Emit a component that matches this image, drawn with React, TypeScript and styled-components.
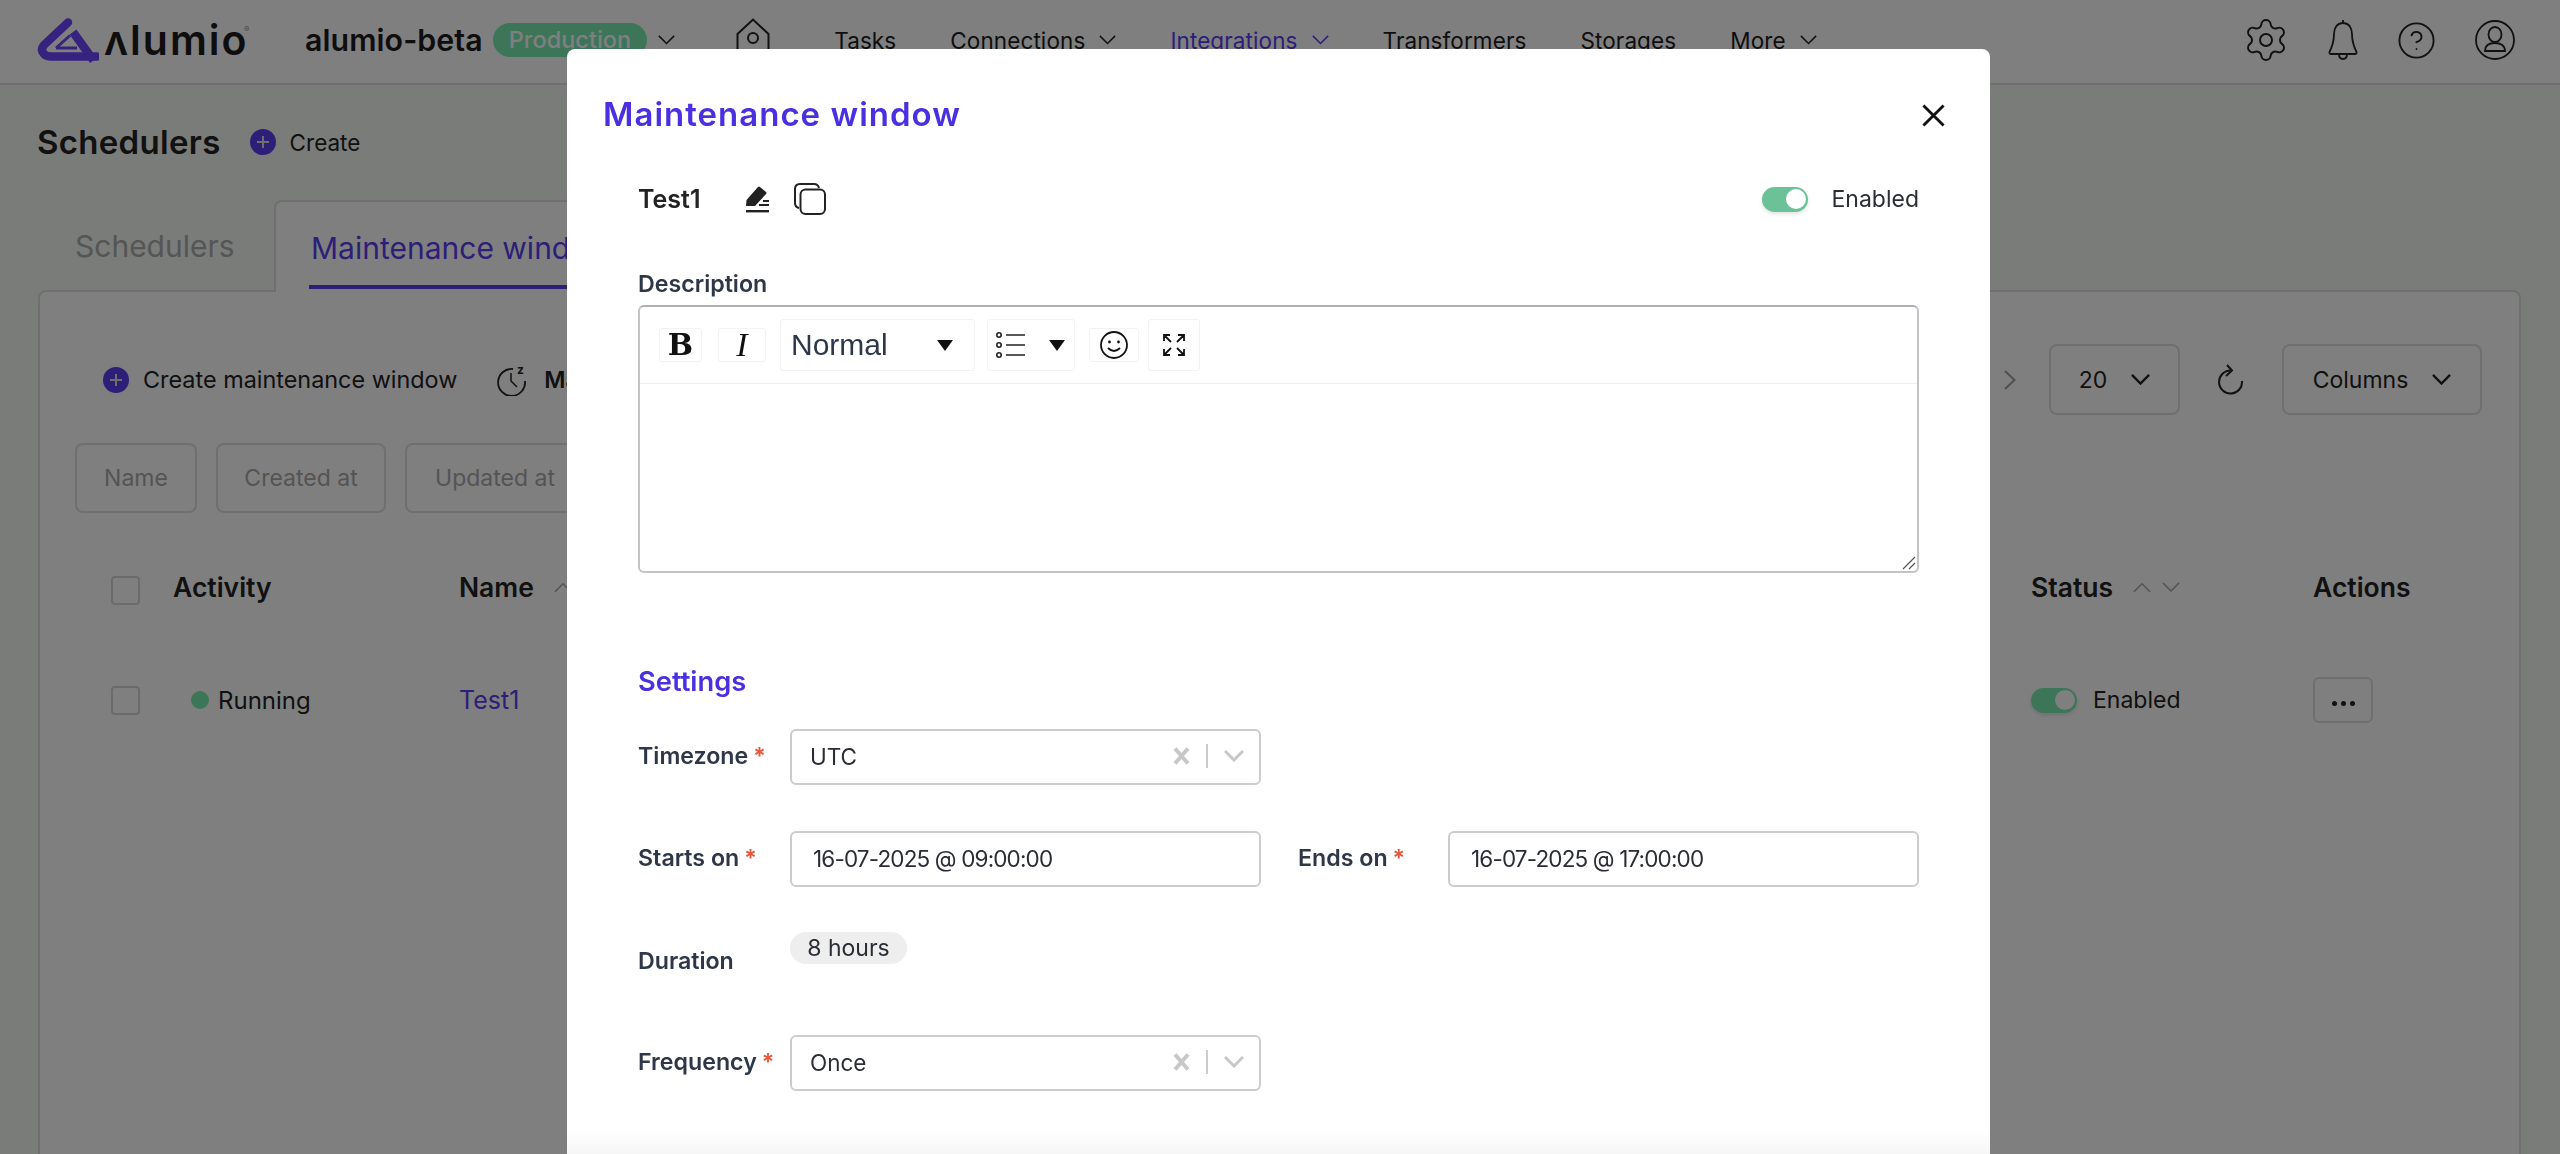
import styled, { createGlobalStyle } from "styled-components";
import { Settings, CircleHelp } from "lucide-react";

const GlobalStyle = createGlobalStyle`
  html, body {
    margin: 0;
    height: 100%;
    overflow: hidden;
    background: #f4f8f4;
    font-family: "Inter", "Liberation Sans", sans-serif;
    color: #222;
  }
`;

const Page = styled.div`
  width: 2560px;
  height: 1154px;
  overflow: hidden;
`;

const Header = styled.header`
  display: flex;
  align-items: center;
  box-sizing: border-box;
  height: 85px;
  padding: 0 45px 3px 37px;
  background: #fff;
  border-bottom: 2px solid #dedede;
`;

const LogoMark = styled.svg`
  width: 62px;
  height: 46px;
  flex: none;
`;

const Wordmark = styled.span`
  position: relative;
  margin-left: 5px;
  width: 201px;
  font-size: 41px;
  font-weight: 600;
  letter-spacing: 2px;
  color: #1c1c1c;
  sup {
    position: absolute;
    left: 140px;
    top: 9px;
    font-size: 8px;
    font-weight: 400;
    letter-spacing: 0;
    color: #888;
  }
`;

const ProjectName = styled.span`
  font-size: 30.3px;
  font-weight: 600;
  letter-spacing: 0.1px;
  color: #1c1c1c;
`;

const EnvPill = styled.span`
  margin-left: 10px;
  padding: 0 16px;
  height: 34px;
  line-height: 34px;
  border-radius: 17px;
  background: #7aeab2;
  color: #fff;
  font-size: 23.5px;
  font-weight: 500;
`;

const EnvCaret = styled.span`
  display: flex;
  margin: 0 61px 0 11px;
`;

const Nav = styled.nav`
  display: flex;
  align-items: center;
  gap: 54px;
  font-size: 22.5px;
  letter-spacing: 0.1px;
`;

const NavItem = styled.span<{ $active?: boolean; $first?: boolean }>`
  display: flex;
  align-items: center;
  gap: 14px;
  margin-left: ${(p) => (p.$first ? "54px" : "0")};
  color: ${(p) => (p.$active ? "#5a3cf0" : "#1c1c1c")};
`;

const HeaderIcons = styled.div`
  display: flex;
  align-items: center;
  gap: 38px;
  margin-left: auto;
  color: #222;
`;

const Main = styled.main`
  padding: 37px 39px 0 38px;
`;

const TitleRow = styled.div`
  display: flex;
  align-items: center;
  height: 40px;
`;

const PageTitle = styled.h1`
  margin: 0 29px 0 -1px;
  font-size: 33px;
  font-weight: 600;
  letter-spacing: 0.3px;
  color: #222;
`;

const AddButton = styled.span<{ $size: number }>`
  display: flex;
  align-items: center;
  gap: 14px;
  font-size: ${(p) => p.$size}px;
  color: #222;
`;

const PlusCircle = styled.span`
  position: relative;
  width: 26px;
  height: 26px;
  flex: none;
  border-radius: 50%;
  background: #5a3cf0;
  &::before,
  &::after {
    content: "";
    position: absolute;
    background: #ddd;
    left: 7px;
    right: 7px;
    top: 12px;
    height: 2px;
  }
  &::after {
    left: 12px;
    right: auto;
    top: 7px;
    width: 2px;
    height: 12px;
  }
`;

const Tabs = styled.div`
  display: flex;
  margin-top: 38px;
  height: 90px;
`;

const Tab = styled.div<{ $active?: boolean }>`
  position: relative;
  z-index: 1;
  box-sizing: border-box;
  height: ${(p) => (p.$active ? "92px" : "90px")};
  width: ${(p) => (p.$active ? "420px" : "236px")};
  padding: 30px 0 0 ${(p) => (p.$active ? "35px" : "37px")};
  font-size: 30px;
  line-height: 32px;
  white-space: nowrap;
  color: ${(p) => (p.$active ? "#5a3cf0" : "#aaa")};
  background: ${(p) => (p.$active ? "#fff" : "transparent")};
  border: ${(p) => (p.$active ? "2px solid #dedede" : "none")};
  border-bottom: none;
  border-radius: 8px 8px 0 0;
`;

const TabUnderline = styled.span`
  position: absolute;
  left: 33px;
  right: 0;
  top: 83px;
  height: 4px;
  background: #5a3cf0;
`;

const Card = styled.section`
  height: 900px;
  box-sizing: border-box;
  padding-top: 52px;
  background: #fff;
  border: 2px solid #dedede;
  border-radius: 8px;
`;

const Toolbar = styled.div`
  display: flex;
  align-items: center;
  height: 71px;
  padding: 0 37px 0 63px;
`;

const SnoozeButton = styled.span`
  display: flex;
  align-items: center;
  gap: 17px;
  margin-left: 38px;
  font-size: 23px;
  font-weight: 600;
  color: #222;
`;

const ToolbarRight = styled.div`
  display: flex;
  align-items: center;
  margin-left: auto;
`;

const PagerNext = styled.svg`
  margin-right: 33px;
`;

const RefreshSvg = styled.svg`
  margin-left: 38px;
`;

const OutlineSelect = styled.div<{ $width: number; $gap?: number }>`
  display: flex;
  align-items: center;
  justify-content: center;
  gap: 24px;
  box-sizing: border-box;
  width: ${(p) => p.$width}px;
  height: 71px;
  margin-left: ${(p) => p.$gap ?? 0}px;
  border: 2px solid #dedede;
  border-radius: 8px;
  font-size: 23px;
`;

const Filters = styled.div`
  display: flex;
  gap: 19px;
  margin: 28px 0 0 35px;
`;

const FilterBox = styled.div<{ $width: number }>`
  box-sizing: border-box;
  width: ${(p) => p.$width}px;
  height: 70px;
  line-height: 66px;
  text-align: center;
  border: 2px solid #dedede;
  border-radius: 8px;
  font-size: 23px;
  color: #a8a8a8;
`;

const TableRow = styled.div<{ $top: number }>`
  display: grid;
  grid-template-columns: 62px 286px 1572px 282px 1fr;
  align-items: center;
  height: 60px;
  margin-top: ${(p) => p.$top}px;
  padding-left: 71px;
`;

const Checkbox = styled.span`
  display: block;
  width: 25px;
  height: 25px;
  border: 2px solid #d6d6d6;
  border-radius: 4px;
`;

const HeadCell = styled.div`
  display: flex;
  align-items: center;
  gap: 20px;
  padding-bottom: 6px;
  font-size: 26.5px;
  font-weight: 600;
  color: #222;
`;

const SortIcons = styled.span`
  display: flex;
  gap: 11px;
`;

const StatusCell = styled.div`
  display: flex;
  align-items: center;
  gap: 9px;
  padding-left: 18px;
  font-size: 24px;
  color: #222;
`;

const StatusDot = styled.span`
  width: 18px;
  height: 18px;
  border-radius: 50%;
  background: #7aeab2;
`;

const LinkCell = styled.div`
  font-size: 25px;
  color: #5a3cf0;
`;

const ToggleCell = styled.div<{ $gap: number }>`
  display: flex;
  align-items: center;
  gap: ${(p) => p.$gap}px;
  font-size: 23px;
  color: #222;
`;

const Toggle = styled.span<{ $color: string }>`
  position: relative;
  display: block;
  width: 46px;
  height: 25px;
  border-radius: 13px;
  background: ${(p) => p.$color};
  box-shadow: 0 2px 4px rgba(0, 0, 0, 0.12);
  &::after {
    content: "";
    position: absolute;
    right: 2px;
    top: 2.5px;
    width: 20px;
    height: 20px;
    border-radius: 50%;
    background: #fff;
  }
`;

const DotsButton = styled.div`
  display: flex;
  align-items: center;
  justify-content: center;
  gap: 4px;
  box-sizing: border-box;
  width: 60px;
  height: 46px;
  padding-top: 6px;
  border: 2px solid #dedede;
  border-radius: 6px;
  i {
    width: 5px;
    height: 5px;
    border-radius: 50%;
    background: #222;
  }
`;

const Overlay = styled.div`
  position: fixed;
  inset: 0;
  z-index: 10;
  background: rgba(0, 0, 0, 0.5);
`;

const Modal = styled.div`
  position: fixed;
  z-index: 11;
  left: 567px;
  top: 49px;
  width: 1423px;
  height: 1105px;
  box-sizing: border-box;
  padding: 0 71px;
  background: #fff;
  border-radius: 8px 8px 0 0;
  overflow: hidden;
`;

const ModalHeader = styled.div`
  display: flex;
  align-items: center;
  justify-content: space-between;
  height: 130px;
  margin: 0 -26px 0 -35px;
`;

const ModalTitle = styled.h2`
  margin: 0;
  font-size: 33px;
  font-weight: 600;
  letter-spacing: 1px;
  color: #4a30e0;
`;

const CloseSvg = styled.svg`
  margin-top: 2px;
`;

const NameRow = styled.div`
  display: flex;
  align-items: center;
  height: 40px;
`;

const NameText = styled.span`
  width: 108px;
  font-size: 25px;
  font-weight: 600;
  color: #222;
`;

const CopyIcon = styled.svg`
  margin-left: 25px;
`;

const EnabledSwitch = styled.div`
  display: flex;
  align-items: center;
  gap: 24px;
  margin-left: auto;
  font-size: 23px;
  color: #2a2d33;
`;

const FieldLabel = styled.label<{ $width?: number }>`
  display: block;
  flex: none;
  box-sizing: border-box;
  width: ${(p) => (p.$width ? `${p.$width}px` : "auto")};
  padding-bottom: 2px;
  font-size: 23.2px;
  font-weight: 600;
  color: #2d3748;
  em {
    font-style: normal;
    margin-left: 5px;
    color: #e8553a;
  }
`;

const DescriptionLabel = styled(FieldLabel)`
  margin-top: 50px;
  height: 36px;
  padding-bottom: 0;
  line-height: 30px;
`;

const Editor = styled.div`
  position: relative;
  box-sizing: border-box;
  height: 268px;
  border: 2px solid #c4c4c8;
  border-top-color: #b0b0b4;
  border-radius: 6px;
`;

const EditorToolbar = styled.div`
  display: flex;
  align-items: center;
  height: 76px;
  padding-left: 19px;
  border-bottom: 1px solid #f0f0f0;
`;

const ToolButton = styled.div<{ $width: number; $tall?: boolean; $gap: number }>`
  display: flex;
  align-items: center;
  justify-content: center;
  box-sizing: border-box;
  width: ${(p) => p.$width}px;
  height: ${(p) => (p.$tall ? 52 : 34)}px;
  margin-left: ${(p) => p.$gap}px;
  border: 1px solid #f2f2f2;
  border-radius: 3px;
`;

const BoldGlyph = styled.span`
  font-family: "DejaVu Serif", "Liberation Serif", serif;
  font-weight: 700;
  font-size: 30px;
  line-height: 32px;
  color: #111;
`;

const ItalicGlyph = styled.span`
  font-family: "Liberation Serif", serif;
  font-style: italic;
  font-size: 34px;
  line-height: 32px;
  color: #111;
`;

const HeadingSelect = styled(ToolButton)`
  justify-content: space-between;
  padding: 0 21px 0 10px;
  font-family: "Liberation Sans", sans-serif;
  font-size: 30px;
  color: #2d3748;
`;

const ListSelect = styled(ToolButton)`
  justify-content: space-between;
  padding: 0 9px 0 8px;
`;

const Caret = styled.span`
  width: 0;
  height: 0;
  border-left: 8.5px solid transparent;
  border-right: 8.5px solid transparent;
  border-top: 11px solid #111;
`;

const ResizeHandle = styled.svg`
  position: absolute;
  right: 1px;
  bottom: 1px;
`;

const SectionTitle = styled.h3`
  margin: 93px 0 31px;
  height: 32px;
  font-size: 27.3px;
  line-height: 32px;
  font-weight: 600;
  color: #4a30e0;
`;

const Form = styled.div`
  display: flex;
  flex-direction: column;
  gap: 46px;
`;

const FormRow = styled.div`
  display: flex;
  align-items: center;
  height: 56px;
`;

const SelectBox = styled.div<{ $width?: number }>`
  display: flex;
  align-items: center;
  box-sizing: border-box;
  width: ${(p) => p.$width ?? 471}px;
  height: 56px;
  padding: 0 0 2px 18px;
  border: 2px solid #ccc;
  border-radius: 6px;
  font-size: 22.5px;
  color: #2a2d33;
`;

const SelectValue = styled.span`
  flex: 1;
`;

const SelectControls = styled.span`
  display: flex;
  align-items: center;
  gap: 16px;
  margin-right: 15px;
`;

const SelectDivider = styled.span`
  width: 2px;
  height: 24px;
  background: #ccc;
`;

const DateField = styled(SelectBox)`
  padding-left: 21px;
  letter-spacing: -0.85px;
`;

const EndField = styled.div`
  display: flex;
  align-items: center;
  margin-left: 37px;
`;

const ChipRow = styled(FormRow)`
  align-items: flex-start;
`;

const ChipLabel = styled(FieldLabel)`
  padding-bottom: 0;
  line-height: 56px;
`;

const Chip = styled.span`
  margin-top: -1px;
  box-sizing: border-box;
  height: 32px;
  width: 117px;
  text-align: center;
  line-height: 32px;
  border-radius: 16px;
  background: #eee;
  font-size: 23px;
  color: #2a2d33;
`;

const FooterFade = styled.div`
  position: absolute;
  left: 0;
  right: 0;
  bottom: 0;
  height: 24px;
  background: linear-gradient(to bottom, #ffffff, #f6f6f6);
`;

const Logo = () => (
  <LogoMark viewBox="0 0 62 46">
    <g fill="none" stroke="#6a46ff" strokeLinejoin="round">
      <path d="M31 5.5 L7 28 Q3 33 7 37 Q9.5 39.5 14 39.5 H60" strokeWidth="8.5" strokeLinecap="round" />
      <path d="M36 15 L56.5 43.5" strokeWidth="8.5" />
      <path d="M19 31 L33 18.5 M19 31 H40" strokeWidth="3" />
    </g>
  </LogoMark>
);

const Chevron = ({ size = 17, up = false, color = "#222", weight = 1.5 }) => (
  <svg width={size} height={size * 0.6} viewBox="0 0 20 12" fill="none" stroke={color} strokeWidth={(weight * 20) / size}>
    <path d={up ? "M1 11 L10 2 L19 11" : "M1 1 L10 10 L19 1"} />
  </svg>
);

const HomeSvg = styled.svg`
  flex: none;
  margin-right: 10px;
`;

const HomeIcon = () => (
  <HomeSvg width="34" height="44" viewBox="0 0 34 44" fill="none" stroke="#222" strokeWidth="2">
    <path d="M1.5 44 V16 L17 1.5 L32.5 16 V44" />
    <circle cx="17" cy="20" r="5" />
  </HomeSvg>
);

const BellIcon = () => (
  <svg width="30" height="42" viewBox="0 0 30 42" fill="none" stroke="#222" strokeWidth="1.8">
    <path d="M15 1 V4 M15 4 C9 4 6 9 6 15 C6 23 4 28 1.5 33 Q1 35 3 35 H27 Q29 35 28.5 33 C26 28 24 23 24 15 C24 9 21 4 15 4 Z" />
    <path d="M11 35 Q11 40 15 40 Q19 40 19 35" />
  </svg>
);

const UserIcon = () => (
  <svg width="40" height="40" viewBox="0 0 40 40" fill="none" stroke="#222" strokeWidth="1.8">
    <circle cx="20" cy="20" r="19" />
    <ellipse cx="20" cy="14.5" rx="6.5" ry="7.5" />
    <path d="M10 31 C10 25 15 23 20 23 C25 23 30 25 30 31 Z" />
  </svg>
);

const SnoozeIcon = () => (
  <svg width="32" height="32" viewBox="0 0 32 32" fill="none" stroke="#222" strokeWidth="1.8">
    <path d="M18 5 A13.5 13.5 0 1 0 30 17" />
    <path d="M16 9 V17 L22 23" strokeWidth="1.5" />
    <text x="22" y="10" fontSize="12" fontWeight="700" fill="#222" stroke="none" fontFamily="Inter, sans-serif">z</text>
  </svg>
);

const RefreshIcon = () => (
  <RefreshSvg width="26" height="31" viewBox="0 0 26 31" fill="none" stroke="#222" strokeWidth="2">
    <path d="M24 17 A11.5 11.5 0 1 1 12.5 6.5" />
    <path d="M9 1 L14 6.5 L8 12" />
  </RefreshSvg>
);

const EditIcon = () => (
  <svg width="23" height="27" viewBox="0 0 23 27" fill="#222">
    <path d="M0 20 L0.5 14 L12 1 Q13 0 14 1 L20 6 Q21 7 20 8 L9 20 Z" />
    <rect x="13" y="18" width="10" height="2" />
    <rect x="17" y="14" width="6" height="2" />
    <rect x="0" y="24" width="23" height="2.4" />
  </svg>
);

const CloseIcon = () => (
  <CloseSvg width="23" height="23" viewBox="0 0 24 24" fill="none" stroke="#111" strokeWidth="3">
    <path d="M1.5 1.5 L22.5 22.5 M22.5 1.5 L1.5 22.5" />
  </CloseSvg>
);

const ClearX = () => (
  <svg width="17" height="18" viewBox="0 0 17 18" fill="none" stroke="#c8c8c8" strokeWidth="4">
    <path d="M2 1.5 L15 16.5 M15 1.5 L2 16.5" />
  </svg>
);

const SmileIcon = () => (
  <svg width="28" height="28" viewBox="0 0 28 28" fill="none" stroke="#111" strokeWidth="1.8">
    <circle cx="14" cy="14" r="13" />
    <circle cx="9.5" cy="11" r="1.4" fill="#111" stroke="none" />
    <circle cx="18.5" cy="11" r="1.4" fill="#111" stroke="none" />
    <path d="M8 17 Q14 23 20 17" />
  </svg>
);

const ExpandIcon = () => (
  <svg width="22" height="22" viewBox="0 0 22 22" fill="none" stroke="#111" strokeWidth="1.8">
    <path d="M1 7 V1 H7 M1 1 L8 8 M15 1 H21 V7 M21 1 L14 8 M1 15 V21 H7 M1 21 L8 14 M21 15 V21 H15 M21 21 L14 14" />
  </svg>
);

const ListIcon = () => (
  <svg width="30" height="26" viewBox="0 0 30 26" fill="none" stroke="#222" strokeWidth="1.6">
    <circle cx="3" cy="3" r="2.2" />
    <circle cx="3" cy="13" r="2.2" />
    <circle cx="3" cy="23" r="2.2" />
    <path d="M10 3 H29 M10 13 H29 M10 23 H29" />
  </svg>
);

const App = () => (
  <Page>
    <GlobalStyle />
    <Header>
      <Logo />
      <Wordmark>
        ʌlumio<sup>®</sup>
      </Wordmark>
      <ProjectName>alumio-beta</ProjectName>
      <EnvPill>Production</EnvPill>
      <EnvCaret>
        <Chevron />
      </EnvCaret>
      <HomeIcon />
      <Nav>
        <NavItem $first>Tasks</NavItem>
        <NavItem>
          Connections <Chevron />
        </NavItem>
        <NavItem $active>
          Integrations <Chevron color="#5a3cf0" />
        </NavItem>
        <NavItem>Transformers</NavItem>
        <NavItem>Storages</NavItem>
        <NavItem>
          More <Chevron />
        </NavItem>
      </Nav>
      <HeaderIcons>
        <Settings size={48} strokeWidth={1} />
        <BellIcon />
        <CircleHelp size={41} strokeWidth={1.1} />
        <UserIcon />
      </HeaderIcons>
    </Header>

    <Main>
      <TitleRow>
        <PageTitle>Schedulers</PageTitle>
        <AddButton $size={22.5}>
          <PlusCircle />
          Create
        </AddButton>
      </TitleRow>
      <Tabs>
        <Tab>Schedulers</Tab>
        <Tab $active>
          Maintenance window
          <TabUnderline />
        </Tab>
      </Tabs>
      <Card>
        <Toolbar>
          <AddButton $size={23.4}>
            <PlusCircle />
            Create maintenance window
          </AddButton>
          <SnoozeButton>
            <SnoozeIcon />
            Maintenance
          </SnoozeButton>
          <ToolbarRight>
            <PagerNext width="12" height="20" viewBox="0 0 12 20" fill="none" stroke="#a0a0a0" strokeWidth="2">
              <path d="M1 1 L10.5 10 L1 19" />
            </PagerNext>
            <OutlineSelect $width={131}>
              20 <Chevron size={19} weight={2.4} />
            </OutlineSelect>
            <RefreshIcon />
            <OutlineSelect $width={200} $gap={38}>
              Columns <Chevron size={19} weight={2.4} />
            </OutlineSelect>
          </ToolbarRight>
        </Toolbar>
        <Filters>
          <FilterBox $width={122}>Name</FilterBox>
          <FilterBox $width={170}>Created at</FilterBox>
          <FilterBox $width={180}>Updated at</FilterBox>
        </Filters>
        <TableRow $top={47}>
          <Checkbox />
          <HeadCell>Activity</HeadCell>
          <HeadCell>
            Name
            <SortIcons>
              <Chevron size={18} up color="#aaa" />
              <Chevron size={18} color="#aaa" />
            </SortIcons>
          </HeadCell>
          <HeadCell>
            Status
            <SortIcons>
              <Chevron size={18} up color="#aaa" />
              <Chevron size={18} color="#aaa" />
            </SortIcons>
          </HeadCell>
          <HeadCell>Actions</HeadCell>
        </TableRow>
        <TableRow $top={50}>
          <Checkbox />
          <StatusCell>
            <StatusDot />
            Running
          </StatusCell>
          <LinkCell>Test1</LinkCell>
          <ToggleCell $gap={16}>
            <Toggle $color="#7aeab2" />
            Enabled
          </ToggleCell>
          <DotsButton>
            <i />
            <i />
            <i />
          </DotsButton>
        </TableRow>
      </Card>
    </Main>

    <Overlay />
    <Modal>
      <ModalHeader>
        <ModalTitle>Maintenance window</ModalTitle>
        <CloseIcon />
      </ModalHeader>
      <NameRow>
        <NameText>Test1</NameText>
        <EditIcon />
        <CopyIcon width="32" height="32" viewBox="0 0 32 32" fill="none" stroke="#222" strokeWidth="2">
          <path d="M5 25 Q1 24 1 20 V6 Q1 1 6 1 H20 Q24 1 25 5" />
          <rect x="6.5" y="6.5" width="24.5" height="24.5" rx="5" />
        </CopyIcon>
        <EnabledSwitch>
          <Toggle $color="#6bc296" />
          Enabled
        </EnabledSwitch>
      </NameRow>
      <DescriptionLabel>Description</DescriptionLabel>
      <Editor>
        <EditorToolbar>
          <ToolButton $width={43} $gap={0}>
            <BoldGlyph>B</BoldGlyph>
          </ToolButton>
          <ToolButton $width={48} $gap={16}>
            <ItalicGlyph>I</ItalicGlyph>
          </ToolButton>
          <HeadingSelect $width={195} $gap={14} $tall>
            Normal
            <Caret />
          </HeadingSelect>
          <ListSelect $width={88} $gap={12} $tall>
            <ListIcon />
            <Caret />
          </ListSelect>
          <ToolButton $width={50} $gap={14}>
            <SmileIcon />
          </ToolButton>
          <ToolButton $width={52} $gap={9} $tall>
            <ExpandIcon />
          </ToolButton>
        </EditorToolbar>
        <ResizeHandle width="14" height="14" viewBox="0 0 14 14" stroke="#555" strokeWidth="1.2">
          <path d="M13 1 L1 13 M13 7 L7 13" />
        </ResizeHandle>
      </Editor>
      <SectionTitle>Settings</SectionTitle>
      <Form>
        <FormRow>
          <FieldLabel $width={152}>
            Timezone<em>*</em>
          </FieldLabel>
          <SelectBox>
            <SelectValue>UTC</SelectValue>
            <SelectControls>
              <ClearX />
              <SelectDivider />
              <Chevron size={20} color="#c8c8c8" weight={3} />
            </SelectControls>
          </SelectBox>
        </FormRow>
        <FormRow>
          <FieldLabel $width={152}>
            Starts on<em>*</em>
          </FieldLabel>
          <DateField>16-07-2025 @ 09:00:00</DateField>
          <EndField>
            <FieldLabel $width={150}>
              Ends on<em>*</em>
            </FieldLabel>
            <DateField $width={471}>16-07-2025 @ 17:00:00</DateField>
          </EndField>
        </FormRow>
        <ChipRow>
          <ChipLabel $width={152}>Duration</ChipLabel>
          <Chip>8 hours</Chip>
        </ChipRow>
        <FormRow>
          <FieldLabel $width={152}>
            Frequency<em>*</em>
          </FieldLabel>
          <SelectBox>
            <SelectValue>Once</SelectValue>
            <SelectControls>
              <ClearX />
              <SelectDivider />
              <Chevron size={20} color="#c8c8c8" weight={3} />
            </SelectControls>
          </SelectBox>
        </FormRow>
      </Form>
      <FooterFade />
    </Modal>
  </Page>
);

export default App;
